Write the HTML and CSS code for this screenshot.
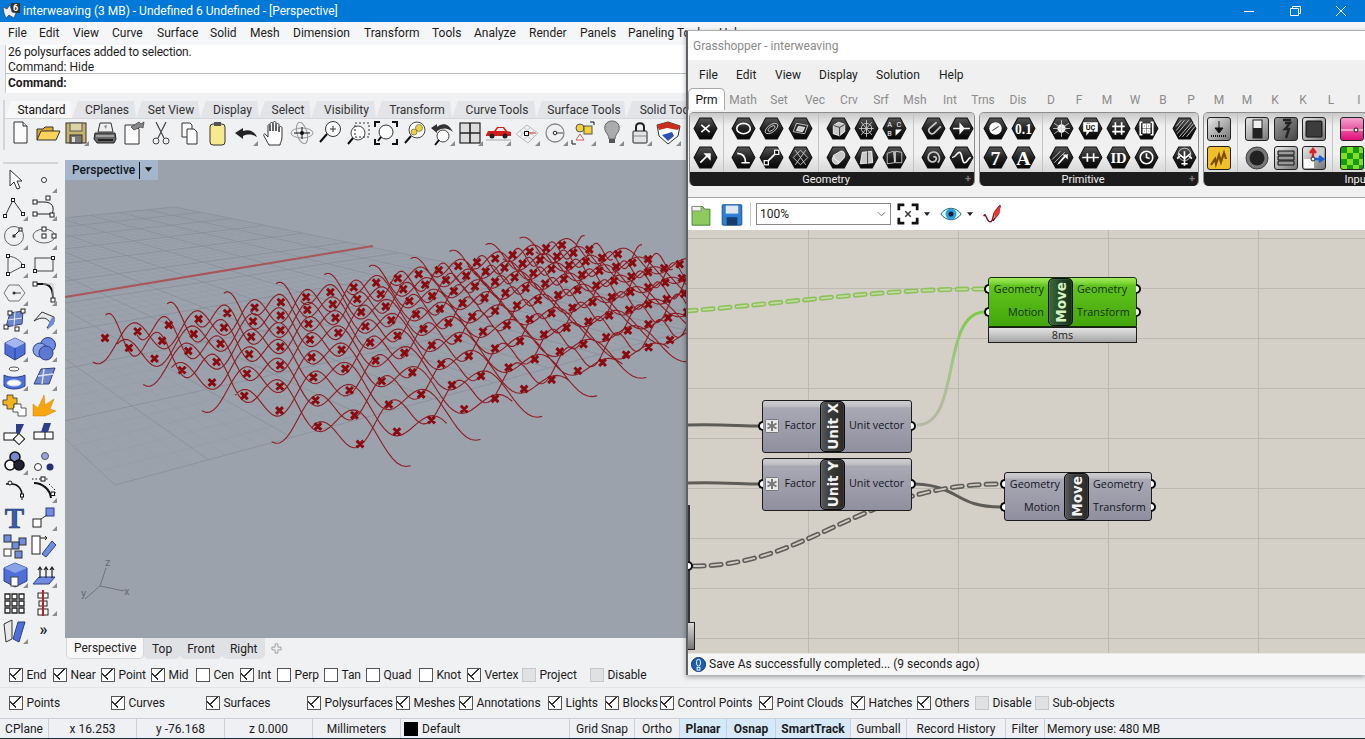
FILE: index.html
```html
<!DOCTYPE html>
<html lang="en">
<head>
    <meta charset="UTF-8">
    <title>interweaving - Rhino and Grasshopper</title>
    <link rel="stylesheet" href="styles.css">
</head>
<body>
    <svg class="defs" width="0" height="0">
        <defs>
            <linearGradient id="hexfill" x1="0" y1="0" x2="0" y2="1">
                <stop offset="0" stop-color="#555"/>
                <stop offset="0.5" stop-color="#222"/>
                <stop offset="1" stop-color="#050505"/>
            </linearGradient>
            <linearGradient id="wirefade" x1="0" y1="1" x2="0" y2="0">
                <stop offset="0" stop-color="#b6b8a4"/>
                <stop offset="0.5" stop-color="#a4c488"/>
                <stop offset="1" stop-color="#7ccb48"/>
            </linearGradient>
            <symbol id="hex" viewBox="0 0 24 22">
                <path d="M6.5 1H17.5L23 11L17.5 21H6.5L1 11Z" fill="url(#hexfill)" stroke="#111" stroke-linejoin="round"/>
            </symbol>
        </defs>
    </svg>

    <div class="titlebar">
        <svg class="logo" viewBox="0 0 18 18">
            <rect x="9" y="1" width="9" height="10" fill="#333"/>
            <path d="M1 5L5 7L8 3L10 10L14 11L12 16L7 13L4 16L2 11Z" fill="#eee" stroke="#333" stroke-width="0.6"/>
            <text x="11" y="9" class="logo-six">6</text>
        </svg>
        <span>interweaving (3 MB) - Undefined 6 Undefined - [Perspective]</span>
        <div class="winbtns">
            <svg viewBox="0 0 46 20"><path d="M18 10.5H28" stroke="#fff" fill="none"/></svg>
            <svg viewBox="0 0 46 20"><path d="M18.5 7.5H26.5V14.5H18.5ZM20.5 7.5V5.5H28.5V12.5H26.5" stroke="#fff" fill="none"/></svg>
            <svg viewBox="0 0 46 20"><path d="M18 5L28 15M28 5L18 15" stroke="#fff" fill="none"/></svg>
        </div>
    </div>

    <div class="menubar">
        <span>File</span><span>Edit</span><span>View</span><span>Curve</span><span>Surface</span><span>Solid</span><span>Mesh</span><span>Dimension</span><span>Transform</span><span>Tools</span><span>Analyze</span><span>Render</span><span>Panels</span><span>Paneling Tools</span><span>Help</span>
    </div>

    <div class="command">
        <div class="history">
            <p>26 polysurfaces added to selection.</p>
            <p>Command: Hide</p>
        </div>
        <div class="prompt">Command:</div>
    </div>

    <div class="toolarea">
        <div class="tabs">
            <span class="tab active">Standard</span><span class="tab">CPlanes</span><span class="tab">Set View</span><span class="tab">Display</span><span class="tab">Select</span><span class="tab">Visibility</span><span class="tab">Transform</span><span class="tab">Curve Tools</span><span class="tab">Surface Tools</span><span class="tab">Solid Tools</span>
        </div>
        <div class="tools">
            <svg viewBox="0 0 28 28"><path d="M8 3H17L21 7V24H8Z" fill="#fbfbfb" stroke="#333"/><path d="M17 3V7H21" fill="#ddd" stroke="#333"/></svg>
            <svg viewBox="0 0 28 28"><path d="M3 21V10H9L11 8H19V12" fill="#e0a830" stroke="#333"/><path d="M3 21L7 12H26L22 21Z" fill="#fbd35a" stroke="#333"/></svg>
            <div class="more"><svg viewBox="0 0 28 28"><rect x="4" y="4" width="20" height="20" fill="#c6b36c" stroke="#333"/><rect x="8" y="4" width="12" height="8" fill="#dcd3a6" stroke="#555"/><rect x="8" y="16" width="12" height="8" fill="#777" stroke="#333"/><rect x="10" y="18" width="3" height="5" fill="#ddd"/></svg></div>
            <svg viewBox="0 0 28 28"><path d="M9 4H20L22 13H7Z" fill="#eee" stroke="#333"/><path d="M13 7L16 6L15 10" fill="#888"/><path d="M4 14H24L25 20L23 24H6L3 20Z" fill="#666" stroke="#222"/><path d="M5 17H23" stroke="#ddd"/><path d="M7 21H22" stroke="#222" stroke-width="2"/></svg>
            <svg viewBox="0 0 28 28"><path d="M6 6H16L20 10V25H6Z" fill="#fbfbfb" stroke="#333"/><path d="M12 8L20 3L22 5L25 3L24 9L22 8L15 11Z" fill="#888" stroke="#333" stroke-width="0.7"/></svg>
            <svg viewBox="0 0 28 28"><path d="M9 3L17 19M19 3L11 19" stroke="#444" fill="none" stroke-width="1.2"/><circle cx="9" cy="22" r="3" fill="none" stroke="#444"/><circle cx="19" cy="22" r="3" fill="none" stroke="#444"/></svg>
            <svg viewBox="0 0 28 28"><path d="M7 4H15L17 6V18H7Z" fill="#fbfbfb" stroke="#333"/><path d="M12 10H19L22 13V25H12Z" fill="#fbfbfb" stroke="#333"/></svg>
            <svg viewBox="0 0 28 28"><rect x="7" y="5" width="15" height="21" rx="3" fill="#f6e98e" stroke="#333"/><rect x="11" y="3" width="7" height="4" fill="#555"/></svg>
            <div class="more"><svg viewBox="0 0 28 28"><path d="M3 14L11 9L11 12C17 10 22 12 25 18C20 15 16 15 11 17L11 20Z" fill="#222"/></svg></div>
            <svg viewBox="0 0 28 28"><path d="M9 26L4 17C3 15 5 14 6 16L8 18V7C8 5 10 5 10 7V12V5C10 3 13 3 13 5V12V4C13 2 16 2 16 4V12V6C16 4 19 4 19 6V13V9C19 7 22 7 22 9V18C22 22 20 24 20 26Z" fill="#fff" stroke="#333"/></svg>
            <svg viewBox="0 0 28 28"><ellipse cx="14" cy="14" rx="11" ry="5" fill="none" stroke="#999"/><ellipse cx="14" cy="14" rx="5" ry="11" fill="none" stroke="#999" transform="rotate(-15 14 14)"/><path d="M6 14H22M14 8V20" stroke="#111"/><circle cx="14" cy="14" r="2" fill="#111"/></svg>
            <svg viewBox="0 0 28 28"><circle cx="17" cy="10" r="7.5" fill="#fff" stroke="#333"/><path d="M14 10H20M17 7V13" stroke="#333"/><path d="M11 15L4 23" stroke="#111" stroke-width="2"/></svg>
            <svg viewBox="0 0 28 28"><circle cx="14" cy="14" r="7" fill="#fff" stroke="#444"/><path d="M9 19L4 25" stroke="#111" stroke-width="2"/><rect x="11" y="4" width="14" height="14" fill="none" stroke="#333" stroke-dasharray="2 2"/></svg>
            <svg viewBox="0 0 28 28"><circle cx="14" cy="13" r="7" fill="#fff" stroke="#333"/><path d="M9 18L6 22" stroke="#111" stroke-width="2"/><path d="M3 8V3H8M20 3H25V8M25 20V25H20M8 25H3V20" fill="none" stroke="#111" stroke-width="2"/></svg>
            <svg viewBox="0 0 28 28"><circle cx="16" cy="11" r="8" fill="#fff" stroke="#444"/><circle cx="18" cy="9" r="3.5" fill="#ecd43e" stroke="#555" stroke-width="0.6"/><circle cx="13" cy="13" r="3" fill="#ecd43e" stroke="#555" stroke-width="0.6"/><path d="M10 17L4 24" stroke="#111" stroke-width="2"/></svg>
            <div class="more"><svg viewBox="0 0 28 28"><circle cx="14" cy="17" r="6" fill="#fff" stroke="#444"/><path d="M10 21L6 26" stroke="#111" stroke-width="2"/><path d="M2 9L8 5V8C14 3 20 5 24 13C19 9 14 8 8 12V14Z" fill="#333"/></svg></div>
            <div class="more"><svg viewBox="0 0 28 28"><rect x="3" y="4" width="20" height="20" fill="#ddd" stroke="#222" stroke-width="1.2"/><path d="M13 4V24M3 14H23" stroke="#222" stroke-width="1.6"/></svg></div>
            <div class="more"><svg viewBox="0 0 28 28"><path d="M1 16L3 12H9L12 8H19L22 12L26 13V17H1Z" fill="#cf1f1f"/><path d="M13 9H18L20 12H11Z" fill="#e8e8e8"/><circle cx="7" cy="17" r="2.5" fill="#222"/><circle cx="20" cy="17" r="2.5" fill="#222"/><path d="M1 21H26" stroke="#aaa"/></svg></div>
            <div class="more"><svg viewBox="0 0 28 28"><path d="M3 15L14 6L25 14L15 24Z" fill="none" stroke="#bbb"/><path d="M7 12L18 20M11 9L21 17M6 18L17 9M10 21L21 12" stroke="#bbb" fill="none" stroke-width="0.7"/><path d="M14 14H23" stroke="#c33"/><rect x="11.5" y="12.5" width="4" height="4" fill="#fff" stroke="#111"/></svg></div>
            <div class="more"><svg viewBox="0 0 28 28"><circle cx="13" cy="14" r="9" fill="none" stroke="#888" stroke-width="1.3"/><path d="M13 14H21" stroke="#444"/><circle cx="13" cy="14" r="1.8" fill="#fff" stroke="#222"/></svg></div>
            <div class="more"><svg viewBox="0 0 28 28"><circle cx="10" cy="9" r="4" fill="#f3d13a" stroke="#555"/><rect x="14" y="7" width="8" height="8" fill="#f3d13a" stroke="#555"/><path d="M10 15L14 21H6Z" fill="#fff" stroke="#c55"/><path d="M20 3H24V6M2 21V25H6" fill="none" stroke="#111"/></svg></div>
            <div class="more"><svg viewBox="0 0 28 28"><path d="M14 2C8 2 6 7 7 11C8 14 11 16 11 20H17C17 16 20 14 21 11C22 7 20 2 14 2Z" fill="#a9abad" stroke="#666"/><rect x="11" y="20" width="6" height="4" fill="#555"/></svg></div>
            <div class="more"><svg viewBox="0 0 28 28"><path d="M10 12V8C10 3 18 3 18 8V12" fill="none" stroke="#222" stroke-width="2"/><rect x="7" y="12" width="14" height="12" rx="1" fill="#e4e4e4" stroke="#222"/><path d="M8 17H20" stroke="#888"/></svg></div>
            <div class="more"><svg viewBox="0 0 28 28"><path d="M3 6L14 3L26 7L24 17L14 25L5 17Z" fill="#fff" stroke="#333"/><path d="M3 6L14 3L26 7L24 11L13 9L5 11Z" fill="#c92f1c"/><path d="M8 16L18 13L20 17L14 22Z" fill="#2c50b4"/></svg></div>
        </div>
    </div>

    <div class="main">
        <div class="sidebar">
            <svg viewBox="0 0 28 28"><path d="M9 4V20L13 16L16 23L19 22L16 15H21Z" fill="#fff" stroke="#333"/></svg>
            <div class="more"><svg viewBox="0 0 28 28"><circle cx="14" cy="14" r="2.5" fill="#fff" stroke="#333"/></svg></div>
            <div class="more"><svg viewBox="0 0 28 28"><path d="M4 22L12 6L22 20" fill="none" stroke="#333"/><rect x="2.5" y="20.5" width="3" height="3" fill="#fff" stroke="#222"/><rect x="10.5" y="4.5" width="3" height="3" fill="#fff" stroke="#222"/><rect x="20.5" y="18.5" width="3" height="3" fill="#fff" stroke="#222"/></svg></div>
            <div class="more"><svg viewBox="0 0 28 28"><path d="M5 8H14C22 8 25 13 22 20H7" fill="none" stroke="#222"/><rect x="3" y="6" width="4" height="4" fill="#fff" stroke="#222"/><rect x="16" y="2" width="4" height="4" fill="#fff" stroke="#222"/><rect x="3" y="18" width="4" height="4" fill="#fff" stroke="#222"/><rect x="20" y="19" width="4" height="4" fill="#fff" stroke="#222"/></svg></div>
            <div class="more"><svg viewBox="0 0 28 28"><circle cx="13" cy="14" r="9.5" fill="none" stroke="#666"/><path d="M13 14L19 8" stroke="#222"/><rect x="11.5" y="12.5" width="3" height="3" fill="#333"/><rect x="18" y="6" width="3" height="3" fill="#fff" stroke="#222"/></svg></div>
            <div class="more"><svg viewBox="0 0 28 28"><ellipse cx="14" cy="14" rx="11" ry="7" fill="none" stroke="#666"/><rect x="12" y="12" width="4" height="4" fill="#fff" stroke="#222"/><rect x="12" y="5" width="4" height="4" fill="#fff" stroke="#222"/><rect x="22" y="12" width="4" height="4" fill="#fff" stroke="#222"/></svg></div>
            <div class="more"><svg viewBox="0 0 28 28"><path d="M7 5C15 6 20 10 22 15L7 23Z" fill="none" stroke="#555"/><rect x="5.5" y="3.5" width="3" height="3" fill="#fff" stroke="#222"/><rect x="20.5" y="13.5" width="3" height="3" fill="#fff" stroke="#222"/><rect x="5.5" y="21.5" width="3" height="3" fill="#fff" stroke="#222"/></svg></div>
            <div class="more"><svg viewBox="0 0 28 28"><rect x="5" y="7" width="18" height="13" fill="none" stroke="#444"/><rect x="3.5" y="18.5" width="3" height="3" fill="#fff" stroke="#222"/><rect x="21.5" y="5.5" width="3" height="3" fill="#fff" stroke="#222"/></svg></div>
            <div class="more"><svg viewBox="0 0 28 28"><path d="M8 6H18L24 14L18 22H8L3 14Z" fill="none" stroke="#777"/><path d="M13 14H20" stroke="#444"/><circle cx="13" cy="14" r="1.5" fill="#333"/></svg></div>
            <div class="more"><svg viewBox="0 0 28 28"><path d="M4 5H13C19 5 23 9 23 19" fill="none" stroke="#111" stroke-width="2"/><path d="M13 5H23V19" fill="none" stroke="#bbb"/><rect x="3" y="3" width="4" height="4" fill="#fff" stroke="#222"/><rect x="21" y="19" width="4" height="4" fill="#fff" stroke="#222"/></svg></div>
            <div class="more"><svg viewBox="0 0 28 28"><path d="M9 6L22 4L21 17L5 20Z" fill="#6d85cf" stroke="#34427a"/><path d="M7 13L21 11M14 5L13 19" stroke="#e6e6f5"/><rect x="7" y="4" width="4" height="4" fill="#fff" stroke="#222"/><rect x="20" y="2" width="4" height="4" fill="#fff" stroke="#222"/><rect x="3" y="18" width="4" height="4" fill="#fff" stroke="#222"/><rect x="14" y="20" width="4" height="4" fill="#fff" stroke="#222"/></svg></div>
            <div class="more"><svg viewBox="0 0 28 28"><path d="M4 14L12 5L24 10V15L17 21L20 16C18 11 12 9 4 14Z" fill="#e8e8e8" stroke="#333"/><path d="M19 16L22 10L24 12V17L17 23Z" fill="#7089d8"/></svg></div>
            <div class="more"><svg viewBox="0 0 28 28"><path d="M14 3L24 8V19L14 25L4 19V8Z" fill="#4e6fd8" stroke="#2c3f88"/><path d="M4 8L14 13L24 8L14 3Z" fill="#a5b7f0"/><path d="M14 13V25" stroke="#2c3f88"/></svg></div>
            <div class="more"><svg viewBox="0 0 28 28"><circle cx="18" cy="10" r="7.5" fill="#6f8ce0" stroke="#2c3f88"/><circle cx="10" cy="15" r="7" fill="#8aa2ea" stroke="#2c3f88"/><circle cx="16" cy="18" r="7" fill="#5c78d0" stroke="#2c3f88"/></svg></div>
            <div class="more"><svg viewBox="0 0 28 28"><ellipse cx="13" cy="6" rx="5" ry="2" fill="#fff" stroke="#555"/><path d="M3 12C8 15 18 15 24 12V23C18 27 8 27 3 23Z" fill="#4e6fd8" stroke="#2c3f88"/><ellipse cx="13" cy="20" rx="7" ry="3" fill="#fff" stroke="#dde"/></svg></div>
            <div class="more"><svg viewBox="0 0 28 28"><path d="M4 21L11 6L25 5L19 21Z" fill="#6d85cf" stroke="#34427a"/><path d="M8 13L23 11M14 6L12 21" stroke="#dbe1f6" stroke-width="1.5"/></svg></div>
            <svg viewBox="0 0 28 28"><path d="M6 3H12V6H16V12H13V17H6V13H2V8H6Z" fill="#f3b31a" stroke="#333" stroke-width="0.8"/><path d="M13 12H20V16H25V24H17V20H12V16H13Z" fill="#fff" stroke="#333" stroke-width="0.8"/></svg>
            <svg viewBox="0 0 28 28"><path d="M3 24V12L8 16L14 3L15 13L24 7L20 17L26 19L15 24Z" fill="#f5a711" stroke="#cc8000" stroke-width="0.5"/></svg>
            <svg viewBox="0 0 28 28"><rect x="3" y="13" width="14" height="7" fill="#fff" stroke="#111"/><path d="M15 4H23L19 13H15Z" fill="#2c3f88"/><rect x="14" y="15" width="8" height="8" fill="#fff" stroke="#111" transform="rotate(45 18 19)"/></svg>
            <svg viewBox="0 0 28 28"><rect x="4" y="12" width="19" height="7" fill="#fff" stroke="#111"/><path d="M11 12L14 3H21L18 12Z" fill="#2c3f88"/><path d="M15 12V19" stroke="#111"/></svg>
            <div class="more"><svg viewBox="0 0 28 28"><circle cx="14" cy="9" r="5" fill="#7b86cc" stroke="#111" stroke-width="1.6"/><circle cx="9" cy="17" r="5" fill="#fff" stroke="#111" stroke-width="1.6"/><circle cx="18" cy="17" r="5" fill="#223" stroke="#111" stroke-width="1.6"/></svg></div>
            <svg viewBox="0 0 28 28"><circle cx="15" cy="8" r="3.5" fill="#9aa0e0" stroke="#555"/><circle cx="8" cy="19" r="3.5" fill="#fff" stroke="#333"/><circle cx="20" cy="19" r="3.5" fill="#252c7a"/></svg>
            <svg viewBox="0 0 28 28"><path d="M5 8H11C16 8 21 12 21 20" fill="none" stroke="#111" stroke-width="1.6"/><circle cx="9" cy="7" r="2" fill="#fff" stroke="#111"/><rect x="19.5" y="18" width="3" height="3" fill="#fff" stroke="#111"/><path d="M21 21V24" stroke="#111"/></svg>
            <div class="more"><svg viewBox="0 0 28 28"><path d="M4 7C12 7 20 13 21 22" fill="none" stroke="#111" stroke-width="2"/><path d="M2 3H18M19 8L25 14L25 20" fill="none" stroke="#111" stroke-dasharray="1.5 2"/><rect x="11" y="1" width="4" height="4" fill="#fff" stroke="#111"/><rect x="21" y="16" width="3.5" height="3.5" fill="#fff" stroke="#111"/></svg></div>
            <div class="big-t">T</div>
            <div class="more"><svg viewBox="0 0 28 28"><rect x="3" y="15" width="8" height="8" fill="#fff" stroke="#222"/><rect x="16" y="4" width="8" height="8" fill="#6f8ce0" stroke="#2c3f88"/><path d="M11 15L17 11" stroke="#333"/></svg></div>
            <svg viewBox="0 0 28 28"><rect x="3" y="3" width="7" height="7" fill="#6f8ce0" stroke="#333"/><rect x="18" y="6" width="7" height="7" fill="#6f8ce0" stroke="#333"/><rect x="11" y="10" width="7" height="7" fill="#6f8ce0" stroke="#333"/><rect x="3" y="17" width="7" height="7" fill="#fff" stroke="#333"/><rect x="14" y="19" width="7" height="7" fill="#6f8ce0" stroke="#333"/></svg>
            <svg viewBox="0 0 28 28"><rect x="2" y="4" width="8" height="18" fill="#fff" stroke="#222"/><path d="M10 6H17L15 4M17 6L15 8" fill="none" stroke="#222"/><path d="M12 22L22 9L26 13L16 25Z" fill="#6f8ce0" stroke="#2c3f88"/></svg>
            <div class="more"><svg viewBox="0 0 28 28"><path d="M14 2L26 7V20L14 26L3 20V7Z" fill="#4e6fd8" stroke="#2c3f88"/><path d="M3 7L14 12L26 7L14 2Z" fill="#8aa2ea"/><rect x="10" y="16" width="7" height="9" fill="#fff" stroke="#444"/></svg></div>
            <div class="more"><svg viewBox="0 0 28 28"><path d="M3 23L9 16H25L19 23Z" fill="#6f8ce0" stroke="#2c3f88"/><path d="M10 17V7M16 17V7M22 17V7M8 9L10 6L12 9M14 9L16 6L18 9M20 9L22 6L24 9" fill="none" stroke="#222" stroke-width="1.2"/></svg></div>
            <svg viewBox="0 0 28 28"><path d="M4 5h5v5h-5zM11 5h5v5h-5zM18 5h5v5h-5zM4 12h5v5h-5zM11 12h5v5h-5zM18 12h5v5h-5zM4 19h5v5h-5zM11 19h5v5h-5zM18 19h5v5h-5z" fill="#fff" stroke="#222" stroke-width="1.3"/></svg>
            <div class="more"><svg viewBox="0 0 28 28"><rect x="8" y="4" width="10" height="5" fill="#fff" stroke="#222"/><rect x="9" y="12" width="8" height="5" fill="#fff" stroke="#222"/><rect x="8" y="20" width="10" height="6" fill="#fff" stroke="#222"/><path d="M13 1V27" stroke="#c21e1e" stroke-width="2"/></svg></div>
            <div class="more"><svg viewBox="0 0 28 28"><path d="M3 7L11 3V22L5 25Z" fill="#e8e8e8" stroke="#333"/><path d="M12 22L17 5L24 5L18 25Z" fill="#4e6fd8" stroke="#2c3f88"/></svg></div>
            <div class="chevrons">»</div>
        </div>

        <div class="viewcol">
            <div class="viewport">
                <div class="viewlabel"><span>Perspective</span><i></i><svg viewBox="0 0 10 6"><path d="M1 0H9L5 5Z" fill="#111"/></svg></div>
                <svg id="scene" class="scene" viewBox="65 160 621 478"></svg>
            </div>
            <div class="viewtabs">
                <span class="vtab active">Perspective</span><span class="vtab">Top</span><span class="vtab">Front</span><span class="vtab">Right</span>
                <svg class="vplus" viewBox="0 0 12 12"><path d="M4.5 1H7.5V4.5H11V7.5H7.5V11H4.5V7.5H1V4.5H4.5Z" fill="none" stroke="#999"/></svg>
            </div>
        </div>
    </div>

    <div class="checks osnaps">
        <label class="check on">End</label><label class="check on">Near</label><label class="check on">Point</label><label class="check on">Mid</label><label class="check">Cen</label><label class="check on">Int</label><label class="check">Perp</label><label class="check">Tan</label><label class="check">Quad</label><label class="check">Knot</label><label class="check on">Vertex</label><label class="check off">Project</label><label class="check off">Disable</label>
    </div>
    <div class="checks filters">
        <label class="check on">Points</label><label class="check on">Curves</label><label class="check on">Surfaces</label><label class="check on">Polysurfaces</label><label class="check on">Meshes</label><label class="check on">Annotations</label><label class="check on">Lights</label><label class="check on">Blocks</label><label class="check on">Control Points</label><label class="check on">Point Clouds</label><label class="check on">Hatches</label><label class="check on">Others</label><label class="check off">Disable</label><label class="check off">Sub-objects</label>
    </div>

    <div class="statusbar">
        <span>CPlane</span><span>x 16.253</span><span>y -76.168</span><span>z 0.000</span><span>Millimeters</span>
        <span class="layer"><b></b>Default</span>
        <span>Grid Snap</span><span>Ortho</span><span class="lit">Planar</span><span class="lit">Osnap</span><span class="lit">SmartTrack</span><span>Gumball</span><span>Record History</span><span>Filter</span>
        <span class="memory">Memory use: 480 MB</span>
    </div>

    <div class="gh">
        <div class="gh-title">Grasshopper - interweaving</div>
        <div class="gh-menu"><span>File</span><span>Edit</span><span>View</span><span>Display</span><span>Solution</span><span>Help</span></div>
        <div class="gh-tabs">
            <span class="active">Prm</span><span>Math</span><span>Set</span><span>Vec</span><span>Crv</span><span>Srf</span><span>Msh</span><span>Int</span><span>Trns</span><span>Dis</span><span>D</span><span>F</span><span>M</span><span>W</span><span>B</span><span>P</span><span>M</span><span>M</span><span>K</span><span>K</span><span>L</span><span>I</span>
        </div>

        <div class="ribbon">
            <div class="panel geometry">
                <div class="panel-body">
                    <div class="group c1">
                        <svg viewBox="0 0 24 22" class="hx"><use href="#hex"/><path d="M8 7.5L16 14.5M16 7.5L8 14.5" stroke-width="2.6"/></svg>
                        <svg viewBox="0 0 24 22" class="hx"><use href="#hex"/><path d="M7 16L14 9" stroke-width="2.2"/><path d="M10 7H17V14Z" class="fill"/></svg>
                    </div>
                    <div class="group c3">
                        <svg viewBox="0 0 24 22" class="hx"><use href="#hex"/><ellipse cx="12" cy="11" rx="6.5" ry="5"/></svg>
                        <svg viewBox="0 0 24 22" class="hx"><use href="#hex"/><ellipse cx="12" cy="11" rx="7" ry="3.5" transform="rotate(-35 12 11)" class="thin"/><ellipse cx="12" cy="11" rx="4" ry="1.8" transform="rotate(-35 12 11)" class="thin"/></svg>
                        <svg viewBox="0 0 24 22" class="hx"><use href="#hex"/><path d="M8 6L19 8L16 16L5 14Z" class="thin"/><path d="M10 9L16 10L14 14L8 13Z" class="soft"/></svg>
                        <svg viewBox="0 0 24 22" class="hx"><use href="#hex"/><path d="M6 7C12 7 14 11 14 16H10M14 16H18" stroke-width="1.7"/></svg>
                        <svg viewBox="0 0 24 22" class="hx"><use href="#hex"/><path d="M7 16L17 6" stroke-width="1.5"/><rect x="5" y="14" width="4" height="4" class="box"/><rect x="15" y="4" width="4" height="4" class="box"/></svg>
                        <svg viewBox="0 0 24 22" class="hx"><use href="#hex"/><path d="M12 4L19 11L12 18L5 11ZM7 4L17 18M17 4L7 18" class="thin"/></svg>
                    </div>
                    <div class="group c3">
                        <svg viewBox="0 0 24 22" class="hx"><use href="#hex"/><path d="M7 8L12 5L18 7V14L13 18L7 16Z" class="soft"/><path d="M7 8L13 10L18 7M13 10V18" class="dark"/></svg>
                        <svg viewBox="0 0 24 22" class="hx"><use href="#hex"/><path d="M12 3V19M5 11L19 11M7 5L17 17M17 5L7 17" class="thin"/><circle cx="12" cy="11" r="5" class="thin"/></svg>
                        <svg viewBox="0 0 24 22" class="hx"><use href="#hex"/><text x="5" y="10" class="mini">A</text><text x="14" y="10" class="mini">C</text><text x="5" y="18" class="mini">B</text><path d="M13 18V12H19Z" class="fill"/></svg>
                        <svg viewBox="0 0 24 22" class="hx"><use href="#hex"/><ellipse cx="10" cy="13" rx="4" ry="4.5" class="soft"/><path d="M7 9L14 5C18 4 19 9 17 12L13 16L8 12Z" class="soft"/></svg>
                        <svg viewBox="0 0 24 22" class="hx"><use href="#hex"/><path d="M8 6L17 5L18 16L6 17Z" class="soft"/><path d="M13 5V17" class="dark"/></svg>
                        <svg viewBox="0 0 24 22" class="hx"><use href="#hex"/><path d="M5 7L11 5L12 16L5 17ZM13 5L19 6L19 16L13 16Z" class="thin"/><path d="M12 5V16" class="thin"/></svg>
                    </div>
                    <div class="group c2">
                        <svg viewBox="0 0 24 22" class="hx"><use href="#hex"/><path d="M15 5L8 11C6 14 10 18 13 15L19 9" stroke-width="3.4" class="gray"/></svg>
                        <svg viewBox="0 0 24 22" class="hx"><use href="#hex"/><path d="M10 5L15 11L10 17Z" class="fill"/><path d="M4 11H20" stroke-width="2"/></svg>
                        <svg viewBox="0 0 24 22" class="hx"><use href="#hex"/><path d="M12 11C13 9 16 11 14 14C11 17 6 14 7 10C8 5 15 4 17 9C18 11 18 14 16 16" stroke-width="1.3" class="gray"/></svg>
                        <svg viewBox="0 0 24 22" class="hx"><use href="#hex"/><path d="M3 11C7 11 7 6 10 6C13 6 12 16 15 16C18 16 18 11 21 11" stroke-width="1.7"/></svg>
                    </div>
                </div>
                <div class="panel-foot">Geometry<em>+</em></div>
            </div>

            <div class="panel primitive">
                <div class="panel-body">
                    <div class="group c2">
                        <svg viewBox="0 0 24 22" class="hx"><use href="#hex"/><circle cx="12" cy="11" r="6" class="fill"/><path d="M9 13L15 9" class="dark" stroke-width="2"/></svg>
                        <svg viewBox="0 0 24 22" class="hx"><use href="#hex"/><text x="12" y="16" class="num">0.1</text></svg>
                        <svg viewBox="0 0 24 22" class="hx"><use href="#hex"/><text x="12" y="18" class="num large">7</text></svg>
                        <svg viewBox="0 0 24 22" class="hx"><use href="#hex"/><text x="12" y="18" class="num large">A</text></svg>
                    </div>
                    <div class="group c4">
                        <svg viewBox="0 0 24 22" class="hx"><use href="#hex"/><circle cx="12" cy="11" r="4" class="fill"/><path d="M12 3V19M5 6L19 16M19 6L5 16M4 11H20" class="thin"/></svg>
                        <svg viewBox="0 0 24 22" class="hx"><use href="#hex"/><path d="M5 5H19V14H11L8 18V14H5Z" class="fill"/><text x="12" y="12.5" class="ink">ÜÇ</text></svg>
                        <svg viewBox="0 0 24 22" class="hx"><use href="#hex"/><path d="M9 5V17M15 5V17M6 9H18M6 14H18" stroke-width="1.2"/></svg>
                        <svg viewBox="0 0 24 22" class="hx"><use href="#hex"/><path d="M8 5H6V17H8M16 5H18V17H16" stroke-width="1"/><path d="M9 7h2v3h-2zM13 7h2v3h-2zM9 12h2v3h-2zM13 12h2v3h-2z" stroke-width="1"/></svg>
                        <svg viewBox="0 0 24 22" class="hx"><use href="#hex"/><path d="M3 13L11 5M5 16L15 6M8 18L18 8" class="thin"/><path d="M9 17L16 9" stroke-width="2"/><path d="M13 8H18V13Z" class="fill"/></svg>
                        <svg viewBox="0 0 24 22" class="hx"><use href="#hex"/><path d="M4 11H20" stroke-width="2"/><path d="M9 7V15M15 7V15" stroke-width="1.6"/></svg>
                        <svg viewBox="0 0 24 22" class="hx"><use href="#hex"/><text x="12" y="16" class="num id">ID</text></svg>
                        <svg viewBox="0 0 24 22" class="hx"><use href="#hex"/><circle cx="12" cy="11" r="6" stroke-width="2"/><path d="M12 7V11L15 12" stroke-width="1.3"/></svg>
                    </div>
                    <div class="group c1">
                        <svg viewBox="0 0 24 22" class="hx"><use href="#hex"/><path d="M4 9L9 3M4 13L12 3M5 16L16 3M7 19L19 5M10 19L21 6M14 19L22 9" class="thin"/></svg>
                        <svg viewBox="0 0 24 22" class="hx"><use href="#hex"/><path d="M12 19V12M12 12L6 7M12 12L18 7M8 9L5 12M16 9L19 12M12 12V5M9 17H15" stroke-width="1.6"/><circle cx="12" cy="8" r="6" class="thin"/></svg>
                    </div>
                </div>
                <div class="panel-foot">Primitive<em>+</em></div>
            </div>

            <div class="panel input">
                <div class="panel-body">
                    <div class="group c1">
                        <div class="sq dim"><svg viewBox="0 0 22 22"><path d="M11 3V12M7 10H15L11 15Z" stroke="#111" fill="#111"/><path d="M3 18H19" stroke="#111" stroke-dasharray="1 1" stroke-width="2"/></svg></div>
                        <div class="sq amber"><svg viewBox="0 0 22 22"><path d="M3 18L7 12L8 17L11 8L13 15L16 6L18 12" fill="none" stroke="#7b4c00" stroke-width="2.2"/></svg></div>
                    </div>
                    <div class="group c3">
                        <div class="sq dim"><svg viewBox="0 0 22 22"><rect x="7" y="2" width="9" height="18" fill="#eee" stroke="#222"/><rect x="7" y="10" width="9" height="10" fill="#222"/></svg></div>
                        <div class="sq dim dark-sq"><svg viewBox="0 0 22 22"><path d="M8 2H16M10 5L15 5L12 9L10 11H14L11 20" fill="none" stroke="#222" stroke-width="2.4"/></svg></div>
                        <div class="sq dim"><svg viewBox="0 0 22 22"><rect x="3" y="3" width="16" height="16" rx="1" fill="#3c3c3c" stroke="#111"/></svg></div>
                        <div class="sq round"><svg viewBox="0 0 24 24"><circle cx="12" cy="12" r="11" fill="#777" stroke="#444"/><circle cx="12" cy="12" r="7.5" fill="#222"/></svg></div>
                        <div class="sq dim"><svg viewBox="0 0 22 22"><path d="M3 4H19V8H3ZM3 9H19V13H3ZM3 14H19V18H3Z" fill="#999" stroke="#111"/></svg></div>
                        <div class="sq dim"><svg viewBox="0 0 22 22"><path d="M1 12H11V21H1Z" fill="#fff"/><path d="M11 1V12H21V1Z" fill="#ccc"/><path d="M10 12V4M7 6L10 2L13 6" stroke="#d22" stroke-width="2.4" fill="none"/><path d="M10 12H18M16 9L20 12L16 15" stroke="#1a5fd6" stroke-width="2.4" fill="none"/><circle cx="10" cy="12" r="2" fill="#fff" stroke="#222"/></svg></div>
                    </div>
                    <div class="group c1">
                        <div class="sq pink"><svg viewBox="0 0 22 22"><path d="M0 12H22" stroke="#fff"/><circle cx="15" cy="12" r="2" fill="#fff" stroke="#111"/></svg></div>
                        <div class="sq green"></div>
                    </div>
                </div>
                <div class="panel-foot bare">Input</div>
            </div>
        </div>

        <div class="gh-bar">
            <svg viewBox="0 0 24 28" class="gh-ico"><path d="M2 5H14L16 8H22V26H2Z" fill="#8ecb5e" stroke="#3f7a2a"/><path d="M2 5H12V10H2Z" fill="#f2f2f2" stroke="#888"/></svg>
            <svg viewBox="0 0 24 28" class="gh-ico"><rect x="1" y="3" width="22" height="23" rx="1" fill="#2f7fd4" stroke="#1a4a8a"/><rect x="5" y="4" width="14" height="9" fill="#dfe6f0"/><rect x="6" y="17" width="12" height="9" fill="#183c70"/></svg>
            <i class="gh-sep"></i>
            <div class="combo"><span>100%</span><svg viewBox="0 0 10 6"><path d="M1 1L5 5L9 1" fill="none" stroke="#666"/></svg></div>
            <svg viewBox="0 0 24 24" class="gh-ico zoomx"><path d="M2 8V2H8M16 2H22V8M22 16V22H16M8 22H2V16" fill="none" stroke="#111" stroke-width="3"/><path d="M9 9L15 15M15 9L9 15" stroke="#333" stroke-width="1.6"/></svg>
            <svg viewBox="0 0 8 5" class="gh-drop"><path d="M0 0H8L4 5Z" fill="#222"/></svg>
            <svg viewBox="0 0 26 20" class="gh-ico eye"><path d="M1 10C7 1 19 1 25 10C19 19 7 19 1 10Z" fill="#dff" stroke="#145"/><circle cx="13" cy="10" r="6.5" fill="#2aa0dc"/><circle cx="13" cy="10" r="3" fill="#102030"/></svg>
            <svg viewBox="0 0 8 5" class="gh-drop"><path d="M0 0H8L4 5Z" fill="#222"/></svg>
            <svg viewBox="0 0 24 24" class="gh-ico pen"><path d="M3 14C5 8 6 20 10 20C14 20 12 12 16 8L21 2L19 11L13 19" fill="none" stroke="#7a1420" stroke-width="1.6"/><path d="M14 10L21 2L20 11L15 16Z" fill="#e23a2e"/></svg>
        </div>

        <div class="canvas">
            <svg class="wires" viewBox="688 230 677 423">
                <path d="M686 311C790 303 880 289 984 289" class="dash-out green-out"/>
                <path d="M686 311C790 303 880 289 984 289" class="dash-in green-in"/>
                <path d="M917 425C962 425 940 312 985 312" class="wire" stroke="url(#wirefade)"/>
                <path d="M688 425C720 424 740 426 760 426M688 483C720 482 740 484 760 484" class="wire dark"/>
                <path d="M916 484C960 486 955 507 1001 507" class="wire dark"/>
                <path d="M694 566C810 566 860 484 1001 484" class="dash-out gray-out"/>
                <path d="M694 566C810 566 860 484 1001 484" class="dash-in gray-in"/>
            </svg>

            <span class="stub-line"></span>
            <span class="stub-port"></span>
            <span class="stub-block"></span>

            <div class="node move green-node n-move-a">
                <i class="port in-1"></i><i class="port in-2"></i><i class="port out-1"></i><i class="port out-2"></i>
                <div class="ins"><span>Geometry</span><span>Motion</span></div>
                <div class="cap"><span>Move</span></div>
                <div class="outs"><span>Geometry</span><span>Transform</span></div>
                <div class="timer">8ms</div>
            </div>

            <div class="node unit n-unit-x">
                <i class="port in-m"></i><i class="port out-m"></i>
                <div class="ins"><span class="with-star"><svg viewBox="0 0 14 14" class="star"><rect x="0.5" y="0.5" width="13" height="13" rx="1" fill="#e8e8e8" stroke="#777"/><path d="M7 2V12M2.5 4.5L11.5 9.5M11.5 4.5L2.5 9.5" stroke="#777" stroke-width="2"/></svg>Factor</span></div>
                <div class="cap"><span>Unit X</span></div>
                <div class="outs"><span>Unit vector</span></div>
            </div>

            <div class="node unit n-unit-y">
                <i class="port in-m"></i><i class="port out-m"></i>
                <div class="ins"><span class="with-star"><svg viewBox="0 0 14 14" class="star"><rect x="0.5" y="0.5" width="13" height="13" rx="1" fill="#e8e8e8" stroke="#777"/><path d="M7 2V12M2.5 4.5L11.5 9.5M11.5 4.5L2.5 9.5" stroke="#777" stroke-width="2"/></svg>Factor</span></div>
                <div class="cap"><span>Unit Y</span></div>
                <div class="outs"><span>Unit vector</span></div>
            </div>

            <div class="node move n-move-b">
                <i class="port in-1"></i><i class="port in-2"></i><i class="port out-1"></i><i class="port out-2"></i>
                <div class="ins"><span>Geometry</span><span>Motion</span></div>
                <div class="cap"><span>Move</span></div>
                <div class="outs"><span>Geometry</span><span>Transform</span></div>
            </div>
        </div>

        <div class="gh-status">
            <svg viewBox="0 0 16 16"><circle cx="8" cy="8" r="7.5" fill="#1c5fb0" stroke="#0d2f60"/><rect x="6" y="2.5" width="4" height="7" rx="2" fill="none" stroke="#fff"/><rect x="6.5" y="11" width="3" height="3" fill="none" stroke="#fff"/></svg>
            <span>Save As successfully completed... (9 seconds ago)</span>
        </div>
    </div>

    <script src="script.js"></script>
</body>
</html>
```

FILE: styles.css
```css
* {
    margin: 0;
    padding: 0;
    box-sizing: border-box;
}

html, body {
    width: 1365px;
    height: 739px;
    overflow: hidden;
}

body {
    position: relative;
    display: flex;
    flex-direction: column;
    font-family: Roboto, 'Liberation Sans', sans-serif;
    font-size: 12px;
    color: #1c1c1c;
    background: #f0f1f3;
}

.defs {
    position: absolute;
}

/* main window */
.titlebar {
    height: 22px;
    flex: none;
    display: flex;
    align-items: center;
    gap: 3px;
    padding-left: 2px;
    background: #0078d7;
    color: #fff;
}

.logo {
    width: 18px;
    height: 18px;
}

.logo-six {
    font-size: 9px;
    font-weight: 700;
    fill: #fff;
}

.winbtns {
    margin-left: auto;
    margin-right: 1px;
    display: flex;
}

.winbtns svg {
    width: 46px;
    height: 20px;
}

.menubar {
    height: 23px;
    flex: none;
    display: grid;
    grid-template-columns: 31px 34px 39px 45px 53px 40px 43px 71px 68px 42px 55px 51px 48px 91px auto;
    align-items: center;
    padding: 0 0 1px 8px;
    background: #f5f6f7;
    white-space: nowrap;
}

.command {
    height: 48px;
    flex: none;
    margin-left: 5px;
    background: #fff;
    border-left: 1px solid #c4c6ca;
    line-height: 15px;
}

.history {
    height: 29px;
    padding-left: 2px;
    border-bottom: 1px solid #b9bcc2;
}

.history p:first-child {
    letter-spacing: -0.17px;
}

.prompt {
    padding: 2px 0 0 2px;
    font-weight: 700;
}

.toolarea {
    height: 67px;
    flex: none;
    padding: 7px 0 0 5px;
    background: linear-gradient(#d3d5d9, #d3d5d9) 3px 7px / 2px 50px no-repeat;
}

.tabs {
    display: grid;
    grid-template-columns: 67px 64px 64px 59px 52px 65px 76px 84px 90px 80px;
    height: 19px;
    padding-top: 1px;
    border-bottom: 1px solid #d4d6da;
}

.tab {
    display: flex;
    align-items: center;
    justify-content: center;
    padding-left: 6px;
    color: #333;
    background: #e2e4e7;
    clip-path: polygon(6px 0, calc(100% - 2px) 0, 100% 100%, 0 100%);
}

.tab.active {
    background: #f8f8f9;
    color: #111;
}

.tools {
    display: grid;
    grid-template-columns: repeat(24, 28.2px);
    padding-left: 1px;
}

.tools svg,
.sidebar svg {
    display: block;
    width: 28px;
    height: 28px;
}

.more {
    position: relative;
}

.more::after {
    content: '';
    position: absolute;
    right: 2px;
    bottom: 1px;
    border-left: 5px solid transparent;
    border-bottom: 5px solid #8c8c8c;
}

/* viewport */
.main {
    height: 500px;
    flex: none;
    display: flex;
}

.sidebar {
    width: 65px;
    flex: none;
    display: grid;
    grid-template-columns: 29px 29px;
    grid-auto-rows: 28.2px;
    padding: 6px 0 0 0.5px;
    justify-content: start;
    background: linear-gradient(#d3d5d9, #d3d5d9) 3px 2px / 55px 2px no-repeat;
}

.big-t {
    width: 28px;
    font-family: 'Liberation Serif', serif;
    font-size: 29px;
    line-height: 28px;
    font-weight: 700;
    text-align: center;
    color: #3b5cae;
    -webkit-text-stroke: 0.6px #1d2c5a;
}

.chevrons {
    width: 28px;
    font-size: 16px;
    line-height: 26px;
    font-weight: 700;
    text-align: center;
    color: #222;
}

.viewcol {
    flex: 1;
    display: flex;
    flex-direction: column;
}

.viewport {
    position: relative;
    height: 478px;
    background: #9ba2ac;
    overflow: hidden;
}

.scene {
    display: block;
    width: 621px;
    height: 478px;
}

.viewlabel {
    position: absolute;
    left: 0;
    top: 0;
    height: 20px;
    width: 93px;
    display: flex;
    align-items: center;
    gap: 4px;
    padding-left: 7px;
    background: #a5b6cc;
    font-weight: 500;
    color: #10161f;
}

.viewlabel i {
    width: 1px;
    height: 17px;
    background: #111;
}

.viewlabel svg {
    width: 9px;
    height: 6px;
}

.viewtabs {
    height: 22px;
    display: flex;
    align-items: flex-start;
    padding-left: 1px;
}

.vtab {
    height: 21px;
    display: flex;
    align-items: center;
    padding: 0 7.5px;
    background: #dfe1e4;
    border-radius: 0 0 5px 5px;
    color: #222;
}

.vtab.active {
    padding: 0 7px;
    background: #f8f8f9;
    border: 1px solid #d5d7da;
    border-top: 0;
}

.vplus {
    width: 11px;
    height: 11px;
    margin: 5px 0 0 6px;
}

/* osnap and filter rows */
.checks {
    flex: none;
    display: grid;
    align-items: center;
    padding-left: 9px;
}

.osnaps {
    height: 28px;
    padding-top: 3px;
    grid-template-columns: 44px 48px 50px 45px 44px 37px 47px 42px 53px 48px 55px 68px auto;
    justify-content: start;
    border-bottom: 1px solid #e2e4e7;
}

.filters {
    height: 30px;
    grid-template-columns: 102px 95px 101px 89px 63px 89px 57px 55px 99px 92px 66px 58px 60px auto;
    justify-content: start;
}

.check {
    display: flex;
    align-items: center;
    gap: 3.5px;
    white-space: nowrap;
    letter-spacing: -0.08px;
}

.check::before {
    content: '';
    width: 12px;
    height: 12px;
    flex: none;
    border: 1px solid #555;
    background: #fff;
}

.check.on::before {
    background: #fff;
    background-image: linear-gradient(45deg, transparent 0 35%, #333 35% 44%, transparent 44%), linear-gradient(-45deg, transparent 0 55%, #333 55% 64%, transparent 64%);
    background-size: 6px 10px, 8px 10px;
    background-position: 0 1px, 3px 0;
    background-repeat: no-repeat;
}

.check.off::before {
    background: #e0e1e3;
    border-color: #c6c7ca;
}

.statusbar {
    height: 21px;
    flex: none;
    display: grid;
    grid-template-columns: 49px 88px 88px 88px 88px 169px 65px 45px 47px 49px 75px 56px 99px 39px 1fr;
    background: #eef0f3;
    border-top: 1px solid #ccd0d6;
    border-bottom: 1px solid #173042;
}

.statusbar span {
    display: flex;
    align-items: center;
    justify-content: center;
    border-right: 1px solid #ccd0d6;
    white-space: nowrap;
}

.statusbar .layer {
    justify-content: flex-start;
    gap: 4px;
    padding-left: 3px;
}

.layer b {
    width: 14px;
    height: 14px;
    background: #000;
}

.statusbar .lit {
    background: #d5e9fa;
    font-weight: 700;
}

.statusbar .memory {
    justify-content: flex-start;
    padding-left: 2px;
    border-right: 0;
}

/* grasshopper window */
.gh {
    position: absolute;
    left: 686px;
    top: 30px;
    width: 679px;
    height: 645px;
    display: flex;
    flex-direction: column;
    background: #f0f0f0;
    border-top: 1px solid #b0b0b0;
    border-left: 2px solid #5e6166;
    box-shadow: 0 2px 5px rgba(0, 0, 0, 0.35);
}

.gh-title {
    height: 29px;
    flex: none;
    display: flex;
    align-items: center;
    padding-left: 5px;
    background: #fff;
    color: #8a8a8a;
}

.gh-menu {
    height: 28px;
    flex: none;
    display: grid;
    grid-template-columns: 37px 39px 44px 57px 63px auto;
    justify-content: start;
    align-items: center;
    padding: 1px 0 0 11px;
}

.gh-tabs {
    height: 22px;
    flex: none;
    display: grid;
    grid-template-columns: 37px 36px 36px 36px 32px 32px 36px 34px 32px 38px repeat(12, 28px);
    padding-top: 1px;
    color: #8c8c8c;
    overflow: hidden;
}

.gh-tabs span {
    display: flex;
    align-items: center;
    justify-content: center;
}

.gh-tabs .active {
    margin-top: -1px;
    background: #fff;
    color: #111;
    border: 1px solid #a8a8a8;
    border-bottom: 0;
    border-radius: 5px 5px 0 0;
}

.ribbon {
    height: 87px;
    flex: none;
    display: flex;
    gap: 4px;
    padding: 2px 0 0 1px;
    overflow: hidden;
}

.panel {
    height: 74px;
    flex: none;
    display: flex;
    flex-direction: column;
    border: 1px solid #8e8e8e;
    border-bottom: 0;
    border-radius: 5px;
    overflow: hidden;
}

.panel.geometry { width: 286px; }
.panel.primitive { width: 220px; }
.panel.input { width: 308px; }

.panel-body {
    flex: 1;
    display: flex;
    background: linear-gradient(#c9c9c9, #efefef 22%, #f1f1f1 70%, #d8d8d8);
}

.group {
    display: grid;
    grid-template-rows: 29px 29px;
    padding: 1px 4px 0 1px;
    margin-right: 4px;
    border-right: 1px solid #c4c4c4;
    justify-items: center;
    align-items: center;
}

.group:last-child {
    border-right: 0;
    margin-right: 0;
}

.c1 { grid-template-columns: repeat(1, 28.3px); }
.c2 { grid-template-columns: repeat(2, 28.3px); }
.c3 { grid-template-columns: repeat(3, 28.3px); }
.c4 { grid-template-columns: repeat(4, 28.3px); }

.hx {
    width: 25px;
    height: 23px;
}

.hx path, .hx ellipse, .hx circle, .hx rect {
    fill: none;
    stroke: #fff;
    stroke-width: 1.6;
}

.hx .thin { stroke-width: 0.8; stroke: #d8d8d8; }
.hx .gray { stroke: #c8c8c8; }
.hx .fill { fill: #fff; stroke: none; }
.hx .soft { fill: #c8c8c8; stroke: #fff; stroke-width: 0.8; }
.hx .dark { stroke: #444; stroke-width: 1; }
.hx .box { fill: #000; stroke-width: 1.2; }

.mini {
    font-size: 7px;
    fill: #fff;
}

.num {
    font-family: 'Liberation Serif', serif;
    font-size: 13px;
    font-weight: 700;
    text-anchor: middle;
    fill: #fff;
}

.num.large { font-size: 19px; }
.num.id { font-size: 14px; }

.ink {
    font-size: 7px;
    font-weight: 700;
    text-anchor: middle;
    fill: #111;
}

.sq {
    width: 24px;
    height: 24px;
    border: 1px solid #222;
    border-radius: 3px;
    background: #ddd;
}

.sq svg {
    display: block;
    width: 100%;
    height: 100%;
}

.sq.dim { background: linear-gradient(135deg, #e8e8e8, #777); }
.sq.dark-sq { background: linear-gradient(135deg, #999, #444); }
.sq.amber { background: #efc02c; }
.sq.round { border: 0; background: none; }
.sq.pink { background: linear-gradient(#f5a0cc, #e0107a); }
.sq.green {
    background-color: #1a9a12;
    background-image: conic-gradient(#7ee02a 25%, transparent 0 50%, #7ee02a 0 75%, transparent 0);
    background-size: 12px 12px;
}

.panel-foot {
    position: relative;
    height: 14px;
    flex: none;
    display: flex;
    align-items: center;
    justify-content: center;
    padding-right: 12px;
    background: #1c1c1c;
    color: #f0f0f0;
    font-size: 11px;
}

.panel-foot.bare {
    padding: 0;
}

.panel-foot em {
    position: absolute;
    right: 3px;
    top: 0;
    font-style: normal;
    font-weight: 700;
    color: #777;
}

.gh-bar {
    height: 33px;
    flex: none;
    display: flex;
    align-items: center;
    padding-left: 2px;
    background: #fff;
    border-top: 1px solid #a8a8a8;
}

.gh-ico {
    width: 22px;
    height: 25px;
    margin-right: 9px;
}

.gh-sep {
    width: 1px;
    height: 24px;
    margin: 0 5px 0 -2px;
    background: #c8c8c8;
}

.combo {
    width: 135px;
    height: 22px;
    display: flex;
    align-items: center;
    justify-content: space-between;
    padding: 0 4px 0 3px;
    margin-right: 6px;
    border: 1px solid #888;
    background: #fff;
}

.combo svg {
    width: 9px;
    height: 6px;
}

.zoomx { width: 22px; height: 22px; margin-right: 5px; }
.eye { width: 22px; height: 18px; margin: 0 5px 0 10px; }
.pen { margin: 0 0 0 8px; }

.gh-drop {
    width: 6px;
    height: 4px;
}

.canvas {
    position: relative;
    flex: 1;
    overflow: hidden;
    background-color: #d4d0c8;
    background-image:
        repeating-linear-gradient(90deg, transparent 0 120px, #bdb9b1 120px 121px, transparent 121px 150px),
        repeating-linear-gradient(0deg, transparent 0 14px, #bdb9b1 14px 15px, transparent 15px 50px);
}

.wires {
    position: absolute;
    left: 0;
    top: 0;
    width: 677px;
    height: 423px;
}

.wires path {
    fill: none;
}

.wire {
    stroke-width: 3;
}

.wire.dark {
    stroke: #5e5c57;
}

.dash-out, .dash-in {
    stroke-dasharray: 10 7;
    stroke-linecap: round;
}

.dash-out { stroke-width: 5; }
.dash-in { stroke-width: 1.8; }
.green-out { stroke: #8cc25a; }
.green-in { stroke: #c6d8a6; }
.gray-out { stroke: #5e5c57; }
.gray-in { stroke: #cfccc4; }

.stub-line {
    position: absolute;
    left: 0;
    top: 275px;
    width: 2px;
    height: 117px;
    background: #333;
}

.stub-port {
    position: absolute;
    left: 0;
    top: 331px;
    width: 5px;
    height: 10px;
    border: 2px solid #111;
    border-left: 0;
    border-radius: 0 10px 10px 0;
    background: #fff;
}

.stub-block {
    position: absolute;
    left: 0;
    top: 392px;
    width: 7px;
    height: 28px;
    border: 1px solid #222;
    border-left: 0;
    background: linear-gradient(#d8d8d8, #777);
}

/* components */
.node {
    position: absolute;
    display: grid;
    grid-template-columns: 59px 25px 1fr;
    align-items: center;
    border: 1px solid #1c1c1c;
    border-radius: 3px;
    background: linear-gradient(#cfcfd2 0, #c0c0c4 10%, #a9a9b5 14%, #8f8f9f 100%);
    font-family: 'Open Sans', sans-serif;
    font-size: 10.8px;
    color: #15151f;
}

.node.unit {
    grid-template-columns: 57px 25px 1fr;
}

.n-move-a { left: 300px; top: 47px; width: 149px; height: 50px; }
.n-unit-x { left: 74px; top: 170px; width: 150px; height: 53px; }
.n-unit-y { left: 74px; top: 228px; width: 150px; height: 53px; }
.n-move-b { left: 316px; top: 242px; width: 148px; height: 49px; }

.green-node {
    background: linear-gradient(#a0ea5c 0, #80d83a 10%, #62c41c 16%, #43a60c 100%);
    color: #153008;
    border-color: #18330c;
    border-radius: 3px 3px 0 0;
}

.ins, .outs {
    display: flex;
    flex-direction: column;
    gap: 6px;
    padding-bottom: 4px;
    white-space: nowrap;
}

.ins span, .outs span {
    line-height: 17px;
}

.ins { align-items: flex-end; padding-right: 4px; }
.outs { align-items: flex-start; padding-left: 4px; }

.with-star {
    width: 100%;
    display: flex;
    align-items: center;
    justify-content: space-between;
}

.ins:has(.with-star) { align-items: stretch; padding-left: 2px; }

.star {
    width: 14px;
    height: 14px;
    margin-top: 2px;
}

.cap {
    align-self: stretch;
    display: flex;
    align-items: center;
    justify-content: center;
    border: 1px solid #0c0c0c;
    border-radius: 5px;
    background: linear-gradient(90deg, #5a5a5a, #3a3a3a 40%, #2a2a2a);
    box-shadow: inset 0 0 0 1px rgba(255, 255, 255, 0.08);
}

.green-node .cap {
    background: linear-gradient(90deg, #3e6a33, #24472a 50%, #173018);
}

.cap span {
    writing-mode: vertical-rl;
    transform: rotate(180deg);
    font-family: 'DejaVu Sans', sans-serif;
    font-size: 13.5px;
    font-weight: 700;
    color: #f2f2f2;
    white-space: nowrap;
}

.green-node .cap span {
    color: #d5f3c2;
}

/* half rings sticking out of the component edge */
.port {
    position: absolute;
    width: 5px;
    height: 10px;
    border: 2px solid #0a0a0a;
    background: #fff;
}

.in-1, .in-2, .in-m {
    left: -5px;
    border-right: 0;
    border-radius: 10px 0 0 10px;
}

.out-1, .out-2, .out-m {
    right: -5px;
    border-left: 0;
    border-radius: 0 10px 10px 0;
}

.in-1, .out-1 { top: 6px; }
.in-2, .out-2 { top: 29px; }
.in-m, .out-m { top: 20px; }

.timer {
    position: absolute;
    left: -1px;
    right: -1px;
    top: 100%;
    margin-top: 1px;
    height: 16px;
    line-height: 14px;
    text-align: center;
    border: 1px solid #1c1c1c;
    background: linear-gradient(#e4e4e4, #a4a4a4);
    color: #222;
}

.gh-status {
    height: 22px;
    flex: none;
    display: flex;
    align-items: center;
    gap: 3px;
    padding: 0 0 1px 3px;
    background: #f6f6f6;
    border-top: 1px solid #e8e8e8;
}

.gh-status svg {
    width: 15px;
    height: 15px;
}
```

FILE: script.js
```js
// unit square -> quad in screen space, corners given clockwise from (0,0)
function makeProjection(p) {
    const [x0, y0] = p[0], [x1, y1] = p[1], [x2, y2] = p[2], [x3, y3] = p[3];
    const dx1 = x1 - x2, dx2 = x3 - x2, sx = x0 - x1 + x2 - x3;
    const dy1 = y1 - y2, dy2 = y3 - y2, sy = y0 - y1 + y2 - y3;
    const det = dx1 * dy2 - dx2 * dy1;
    const g = (sx * dy2 - dx2 * sy) / det;
    const h = (dx1 * sy - sx * dy1) / det;
    const a = x1 - x0 + g * x1, b = x3 - x0 + h * x3;
    const d = y1 - y0 + g * y1, e = y3 - y0 + h * y3;
    return function (u, v) {
        const w = g * u + h * v + 1;
        return [(a * u + b * v + x0) / w, (d * u + e * v + y0) / w];
    };
}

function toPath(points) {
    return 'M' + points.map(pt => pt[0].toFixed(1) + ' ' + pt[1].toFixed(1)).join('L');
}

function drawGrid(parts) {
    const plane = makeProjection([[175, 207], [727, 320], [115, 485], [-149, 239]]);
    const count = 50;
    let minor = '';
    let major = '';
    for (let i = 0; i <= count; i++) {
        const line = toPath([plane(i / count, 0), plane(i / count, 1)]) + toPath([plane(0, i / count), plane(1, i / count)]);
        if (i % 5 === 0) major += line;
        else minor += line;
    }
    parts.push(`<path d="${minor}" fill="none" stroke="#929aa4" stroke-width="0.5"/>`);
    parts.push(`<path d="${major}" fill="none" stroke="#868d97" stroke-width="0.7"/>`);
    parts.push('<path d="M65 297L373 246" stroke="#a8555c" stroke-width="2"/>');
}

function drawWeave(parts) {
    const cols = 20, rows = 8;
    const surface = makeProjection([[105, 338], [562, 245], [825, 288], [360, 444]]);
    const at = (i, j) => surface(i / cols, j / rows);
    const lift = (i, j) => {
        const a = at(i, j), b = at(i + 0.5, j);
        return Math.hypot(b[0] - a[0], b[1] - a[1]) / 16 + 0.35;
    };
    let curves = '';

    for (let j = 0; j < rows; j++) {
        const pts = [];
        for (let t = -0.7; t <= cols + 0.7; t += 0.1) {
            const p = at(t, j + 0.5);
            pts.push([p[0], p[1] - 12 * lift(t, j + 0.5) * Math.sin(Math.PI * (t + j))]);
        }
        curves += toPath(pts);
    }
    for (let i = 0; i < cols; i++) {
        const pts = [];
        for (let t = -0.7; t <= rows + 0.7; t += 0.1) {
            const p = at(i + 0.5, t);
            pts.push([p[0], p[1] + 12 * lift(i + 0.5, t) * Math.sin(Math.PI * (t + i))]);
        }
        curves += toPath(pts);
    }
    parts.push(`<path d="${curves}" fill="none" stroke="#8e1b22" stroke-width="1.1"/>`);

    let marks = '';
    for (let i = 0; i <= cols; i++) {
        for (let j = 0; j <= rows; j++) {
            const [x, y] = at(i, j);
            marks += `M${(x - 3.4).toFixed(1)} ${(y - 3.4).toFixed(1)}l6.8 6.8m0 -6.8l-6.8 6.8`;
        }
    }
    parts.push(`<path d="${marks}" fill="none" stroke="#8a0a10" stroke-width="3"/>`);
}

function drawAxes(parts) {
    parts.push('<path d="M100 586L106 568M100 586L85 599M100 586L124 591" stroke="#6d747d" fill="none"/>');
    parts.push('<text x="105" y="566" fill="#666d76" font-size="11">z</text>');
    parts.push('<text x="81" y="597" fill="#666d76" font-size="11">y</text>');
    parts.push('<text x="124" y="595" fill="#666d76" font-size="11">x</text>');
}

const parts = [];
drawGrid(parts);
drawWeave(parts);
drawAxes(parts);
document.getElementById('scene').innerHTML = parts.join('');
```
